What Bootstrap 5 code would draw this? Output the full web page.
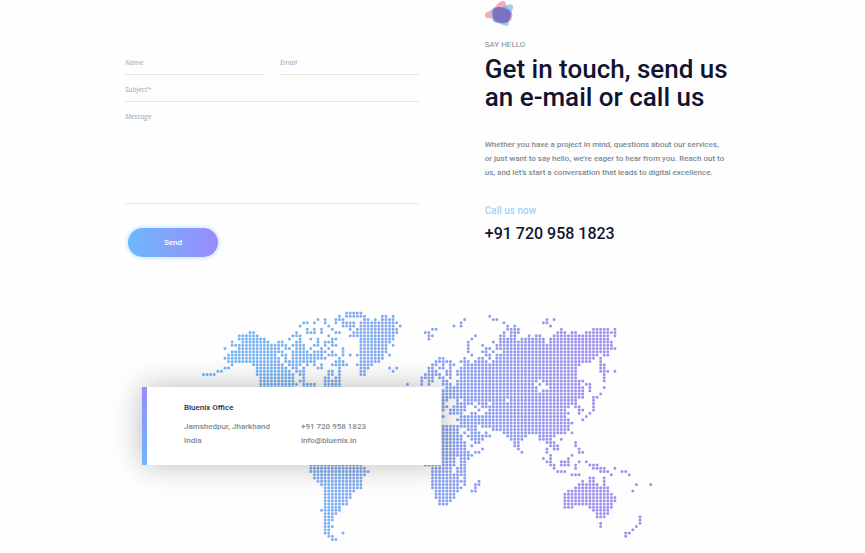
<!DOCTYPE html>
<html lang="en">
<head>
<meta charset="utf-8">
<meta name="viewport" content="width=device-width, initial-scale=1">
<title>Bluenix – Contact</title>
<link href="https://cdn.jsdelivr.net/npm/bootstrap@5.3.0/dist/css/bootstrap.min.css" rel="stylesheet">
<style>
  body { font-family: Roboto, sans-serif; font-weight: 500; font-size: 8px; line-height: 14px; color: #80898e; background: #fefefe; }
  .page { max-width: 639px; }
  .form-side { padding-top: 48px; padding-right: 65px; }
  .info-side { padding-left: 1px; }
  .line-input { border: 0; border-bottom: 1px solid #e6e6e8; border-radius: 0; background: transparent; padding: 4px 0 1px; height: 27px; font: italic 400 7px/14px "Open Sans", sans-serif; color: #111430; }
  .line-input:focus { background: transparent; box-shadow: none; border-color: #8fa5fa; }
  .line-input::placeholder { color: #8fa6ba; opacity: 1; }
  textarea.line-input { height: 102px; padding-top: 8px; resize: none; }
  .send-btn { width: 90px; height: 29px; margin: 24px 0 0 3px; padding: 0; border: 0; font-size: 8px; font-weight: 500; color: #fff; background: linear-gradient(90deg, #6eb7fc, #9a8cfa); box-shadow: 0 0 3px 2px #d5effd; }
  .send-btn:hover { color: #fff; }
  .emblem { width: 29px; height: 27px; }
  .eyebrow { margin-top: 11px; font-weight: 400; }
  .headline { font-size: 26px; line-height: 28px; font-weight: 500; color: #111430; margin: 3px 0 0; }
  .intro { margin-top: 27px; }
  .call-label { font-size: 10px; color: #a6cffa; margin-top: 24px; }
  .call-number { font-size: 16px; line-height: 20px; color: #111430; margin-top: 6px; }
  .map-area { margin-top: 54px; }
  .map-art { width: 74%; margin-left: 12%; }
  .office { top: 76px; left: 17px; width: 299px; padding: 14px 0 17px 37px; border-left: 5px solid; border-image: linear-gradient(#9a8cfa, #6eb7fc) 1; background: #fff; box-shadow: 0 0 30px rgba(0, 0, 0, .27); }
  .office h2 { font-size: 8px; line-height: 14px; font-weight: 500; color: #2b2d42; margin: 0 0 5px; }
  .office-col { width: 117px; }
</style>
</head>
<body>
<main class="container page">
  <div class="row g-0">
    <form class="col-7 form-side">
      <div class="d-flex gap-3">
        <input class="form-control line-input" type="text" placeholder="Name" aria-label="Name">
        <input class="form-control line-input" type="email" placeholder="Email" aria-label="Email">
      </div>
      <input class="form-control line-input" type="text" placeholder="Subject*" aria-label="Subject" required>
      <textarea class="form-control line-input" placeholder="Message" aria-label="Message"></textarea>
      <button type="submit" class="btn rounded-pill send-btn">Send</button>
    </form>
    <section class="col-5 info-side">
      <svg class="emblem d-block" viewBox="0 0 29 27" aria-hidden="true">
        <path d="M0 15C0 11 6 12 9 8C12 5 14 1 18 1C22 1 20 5 23 8C27 12 28 14 27 18C26 22 23 22 19 21C14 21 12 20 9 19C5 18 0 19 0 15Z" fill="#f1869f" fill-opacity=".7"/>
        <path d="M8 8C12 6 16 8 20 6C24 4 29 3 28 8C26 12 27 15 25 18C23 21 25 25 22 26C18 26 16 23 12 23C7 22 7 19 7 16C7 12 5 10 8 8Z" fill="#68b5f2" fill-opacity=".65"/>
        <path d="M9 9C12 6 18 7 22 9C26 11 27 14 25 18C24 23 20 24 15 23C10 22 8 20 8 16C7 13 7 11 9 9Z" fill="#7563ba" fill-opacity=".8"/>
      </svg>
      <div class="eyebrow">SAY HELLO</div>
      <h1 class="headline">Get in touch, send us<br>an e-mail or call us</h1>
      <p class="intro mb-0">Whether you have a project in mind, questions about our services,<br>or just want to say hello, we’re eager to hear from you. Reach out to<br>us, and let’s start a conversation that leads to digital excellence.</p>
      <div class="call-label">Call us now</div>
      <div class="call-number">+91 720 958 1823</div>
    </section>
  </div>

  <section class="map-area position-relative">
    <svg class="map-art d-block" viewBox="0 0 455 232" role="img" aria-label="World map">
      <defs>
        <linearGradient id="mapTint" gradientUnits="userSpaceOnUse" x1="0" y1="0" x2="455" y2="0">
          <stop offset=".1" stop-color="#74b5f5"/><stop offset=".3" stop-color="#7caff5"/><stop offset=".6" stop-color="#8b9df2"/><stop offset=".85" stop-color="#9d91ee"/>
        </linearGradient>
      </defs>
      <path id="mapDots" fill="none" stroke="url(#mapTint)" stroke-width="3" stroke-linecap="round"/>
    </svg>
    <address class="office position-absolute mb-0">
      <h2>Bluenix Office</h2>
      <div class="d-flex">
        <div class="office-col">Jamshedpur, Jharkhand<br>India</div>
        <div class="office-col">+91 720 958 1823<br>info@bluenix.in</div>
      </div>
    </address>
  </section>
</main>
<script>
  // Columns that hold a dot, one string per map row: "from-to" runs or single columns.
  const rows = [
    "40-44",
    "38 40-45 50-51 53 80",
    "32 34 37-39 45-46 48 50-53 73 81-82 96 98",
    "28-29 31 34 37 39-42 44-54 72 84 95-96",
    "27 35 39-42 44-53 55 70 72 85 87 97",
    "29 31 33 36 41 43-54 64-65 85-88 100 109-113 115",
    "13-14 26 29-31 33 37-38 42 43-54 62-63 84 86-88 99-101 103-104 107-113 114-115",
    "10-15 25-27 35 41-53 63-64 76 83-84 86-87 91 93-94 98-113 115",
    "10-17 24 27 30 32 36-37 44-53 63 75 83-87 89-95 97-113",
    "8 11-18 21-22 26-27 32 34-36 44-52 74 81 83-95 97-114",
    "8-9 10-23 25-28 31-32 34 36-37 44-51 53 74 78 82-113 114",
    "6 10-21 23-24 26-28 30 33 35 39 44-51 74 79-80 82-83 84-113 114-115",
    "8-22 25-29 31-34 36 39 44-51 74 78 79 81 84-113",
    "7-20 22-23 25-33 35-37 39 41 43-50 52 75 79 80 82-110 112-113",
    "6-21 23 25-34 38 44-50 66-67 73 77-78 80 82-109 111",
    "7-21 23-28 29-31 37-39 44-49 65-69 72-74 76-79 81-108 111",
    "8 14-22 24-27 29 31 33 36-40 43-47 64-65 67 69-70 73-105 111-112",
    "6-7 15-23 25-26 28 32 33 38 44-46 52 54 63-64 66-67 69 72-104 111-112",
    "4-5 15-24 26-28 35 36 38 44-45 53 63-65 68-69 71-104 111-113 115",
    "0-3 15-25 27-28 35-36 38 44-45 62-66 68-69 71-104 112",
    "16-25 28 34-35 37-38 61-64 66-67 69 72-104 112",
    "16-25 27-28 34-38 61 63-64 67-68 71-93 95-106 112",
    "16-26 28-31 34-38 57 61 63 67-69 71-92 94 96-105 107-108",
    "16-25 28-31 34-38 68-93 97-106 108 112",
    "67-93 95-106 108",
    "67-106 111",
    "67-106 109-110",
    "67-68 71 73-84 86-104 109",
    "67 71-74 75 77-79 81-104 109",
    "67-68 70-73 76 78-102 104-105 109",
    "67 69-73 77 80-101 105 106 109",
    "69-72 75-76 79-102 105 108",
    "67 72-101 107",
    "71-102 106",
    "72-103",
    "67-71 72-76 78-102",
    "67-71 74-76 81-102",
    "67-71 73 75-77 79 84-101 103",
    "67-72 74-78 79-80 85-90 94-98",
    "67-72 75-78 86-89 94-97 100",
    "67-72 73 76-77 87-88 96-98 104",
    "67-73 75 87-88 97-99 104",
    "67-73 78 88 96 98-99 105",
    "67-74 76-77 89 96 105-106",
    "67-75 97 103",
    "67-70 72-74 95 97 102",
    "67-70 72-73 96-97 100-102 105 107",
    "30-44 62-70 72-73 97-98 100-102 104 108-110",
    "30-45 64-69 71-73 98 104 109-112 115",
    "30-46 64-69 71-73 99-101 111-113 117-118",
    "31-45 64-73 103-105 114 119",
    "31-44 64-71 73 108-109 112",
    "32-44 64-73 77 106 108-109 112",
    "33-44 64-71 73 76-77 105-110 112 121 125",
    "34-44 64-72 76 104-113",
    "34-42 65-71 75-76 102-113 120",
    "34-41 65-70 101-114",
    "34-41 65-70 101-115",
    "34-40 66-69 101-115",
    "34-40 66-68 101-105 106-114",
    "34-38 101-103 108-114",
    "33-38 109-113",
    "34-37 110-113",
    "34-36 110-112 122",
    "34-36 122",
    "34-35 111 122",
    "34-36 111 121",
    "34-35 120",
    "34-35 39 118-119",
    "35-36 118",
    "36-37"
  ];
  let d = "";
  rows.forEach((line, r) => line.split(" ").forEach(run => {
    const [from, to = from] = run.split("-").map(Number);
    for (let c = from; c <= to; c++) d += `M${(4.5 + c * 3.577).toFixed(2)} ${(2 + r * 3.235).toFixed(2)}h0`;
  }));
  document.getElementById("mapDots").setAttribute("d", d);
</script>
<script src="https://cdn.jsdelivr.net/npm/bootstrap@5.3.0/dist/js/bootstrap.bundle.min.js"></script>
</body>
</html>
